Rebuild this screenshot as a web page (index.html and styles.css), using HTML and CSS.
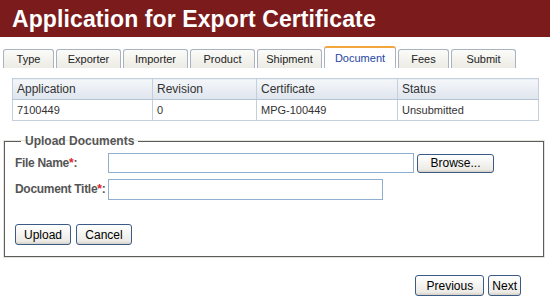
FILE: index.html
```html
<!DOCTYPE html>
<html lang="en">
<head>
    <meta charset="UTF-8">
    <title>Application for Export Certificate</title>
    <link rel="stylesheet" href="styles.css">
</head>
<body>
    <div class="page-header">
        <h1>Application for Export Certificate</h1>
    </div>

    <!-- Wizard tabs -->
    <div class="tabs">
        <div class="tab tab-sm">Type</div>
        <div class="tab">Exporter</div>
        <div class="tab">Importer</div>
        <div class="tab">Product</div>
        <div class="tab">Shipment</div>
        <div class="tab active">Document</div>
        <div class="tab tab-sm">Fees</div>
        <div class="tab">Submit</div>
    </div>

    <table class="summary">
        <thead>
            <tr>
                <th class="col-app">Application</th>
                <th class="col-rev">Revision</th>
                <th class="col-cert">Certificate</th>
                <th>Status</th>
            </tr>
        </thead>
        <tbody>
            <tr>
                <td>7100449</td>
                <td>0</td>
                <td>MPG-100449</td>
                <td>Unsubmitted</td>
            </tr>
        </tbody>
    </table>

    <fieldset class="upload">
        <legend>Upload Documents</legend>
        <div class="form-row">
            <label>File Name<span class="req">*</span>:</label>
            <input type="text" class="input-file">
            <button class="btn btn-browse">Browse...</button>
        </div>
        <div class="form-row">
            <label>Document Title<span class="req">*</span>:</label>
            <input type="text" class="input-title">
        </div>
        <div class="form-actions">
            <button class="btn">Upload</button>
            <button class="btn">Cancel</button>
        </div>
    </fieldset>

    <div class="nav-buttons">
        <button class="btn btn-prev">Previous</button>
        <button class="btn btn-next">Next</button>
    </div>
</body>
</html>
```

FILE: styles.css
```css
body {
    margin: 0;
    font-family: "Liberation Sans", Arial, sans-serif;
    font-size: 12px;
    color: #333;
    background-color: #fff;
}
.page-header {
    background-color: #7b1b1c;
    height: 37px;
    padding-left: 12px;
}
.page-header h1 {
    margin: 0;
    color: #fff;
    font-size: 23px;
    line-height: 38px;
    font-weight: bold;
    letter-spacing: 0.1px;
}
.tabs {
    display: flex;
    align-items: flex-end;
    gap: 2px;
    padding-left: 3px;
    margin-top: 10px;
    height: 21px;
}
.tab {
    width: 65px;
    height: 19px;
    line-height: 19px;
    font-size: 11px;
    color: #222;
    text-align: center;
    border: 1px solid #a9b3bf;
    border-bottom: none;
    border-radius: 3px 3px 0 0;
    background: linear-gradient(#fbfbf9, #ecebe4);
    box-sizing: border-box;
}
.tab-sm {
    width: 51px;
}
.tab.active {
    width: 72px;
    height: 22px;
    line-height: 21px;
    color: #2546a4;
    background: #fff;
    border-top: 2px solid #f3a63c;
}
.summary {
    margin: 10px 0 0 12px;
    width: 527px;
    border-collapse: collapse;
    border: 1px solid #98abc4;
    font-size: 11px;
}
.summary th, .summary td {
    border: 1px solid #c4cfdd;
    padding: 0 4px;
    text-align: left;
    font-weight: normal;
    color: #333;
}
.summary th {
    height: 20px;
    font-size: 12px;
    background: linear-gradient(#f4f6f9, #dfe5ee);
    border-bottom-color: #b6c3d6;
}
.summary td {
    height: 20px;
}
.col-app {
    width: 131px;
}
.col-rev {
    width: 95px;
}
.col-cert {
    width: 132px;
}
.upload {
    margin: 13px 6px 0 4px;
    padding: 2px 10px 11px 10px;
    border: 1px solid #5c5c5c;
    box-shadow: 0 0 0 1px #e4e4dc;
}
.upload legend {
    padding: 0 4px;
    margin-left: 6px;
    font-weight: bold;
    color: #555;
}
.form-row {
    display: flex;
    align-items: center;
    height: 26px;
}
.form-row label {
    flex: 0 0 93px;
    white-space: nowrap;
    font-weight: bold;
    color: #555;
    letter-spacing: -0.3px;
}
.req {
    color: #e0232a;
}
.form-row input {
    height: 16px;
    padding: 1px 2px;
    border: 1px solid #8faed0;
    font-family: inherit;
    font-size: 12px;
}
.input-file {
    width: 300px;
}
.input-title {
    width: 269px;
    height: 17px !important;
}
.form-actions {
    display: flex;
    gap: 5px;
    margin-top: 22px;
}
.btn {
    height: 21px;
    min-width: 56px;
    padding: 0 6px;
    font-family: "Liberation Sans", Arial, sans-serif;
    font-size: 12px;
    color: #000;
    border: 1px solid #3c5a86;
    border-radius: 3px;
    background: linear-gradient(#ffffff, #ecebe6 85%, #d6d0c5);
    cursor: pointer;
}
.btn-browse {
    margin-left: 3px;
    width: 77px;
    height: 19px;
}
.nav-buttons {
    display: flex;
    justify-content: flex-end;
    gap: 4px;
    margin: 18px 29px 0 0;
}
.btn-prev {
    width: 69px;
}
.btn-next {
    min-width: 31px;
    padding: 0 3px;
}
```
